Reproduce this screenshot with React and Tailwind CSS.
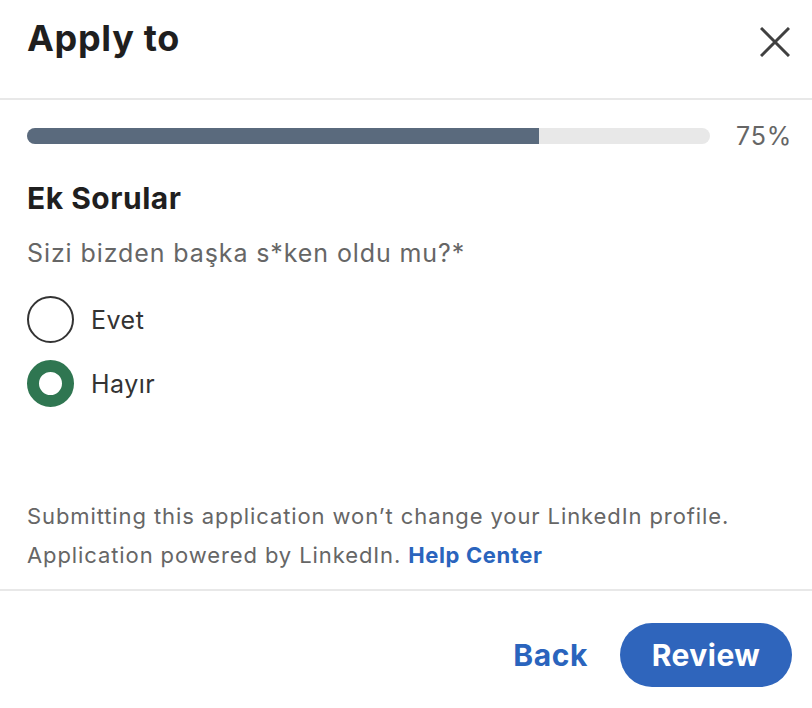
export default function App() {
  const progress = 75;

  return (
    <div className="w-[812px] h-[708px] bg-white font-['Inter',_'Liberation_Sans',_sans-serif] text-[#1f1f1f] overflow-hidden">
      {/* başlık */}
      <div className="h-[100px] pl-[27px] pr-[22px] flex items-start justify-between border-b-2 border-[#e8e8e8]">
        <h1 className="mt-[15px] text-[36px] leading-[46px] font-bold tracking-[0.7px]">Apply to</h1>
        <button className="mt-[27px] text-[#404040]" aria-label="Close">
          <svg width="30" height="30" viewBox="0 0 30 30" fill="none" stroke="currentColor" strokeWidth="3">
            <path d="M1 1 L29 29 M29 1 L1 29" />
          </svg>
        </button>
      </div>

      <div className="pl-[27px] pr-[20px]">
        {/* ilerleme */}
        <div className="mt-[21px] flex items-center gap-[25px]">
          <div className="flex-1 h-[16px] rounded-full bg-[#e8e8e8] overflow-hidden">
            <div className="h-full bg-[#5a6a7d]" style={{ width: `${progress}%` }} />
          </div>
          <span className="w-[57px] text-right text-[25px] leading-[30px] tracking-[0.8px] text-[#666666]">{progress}%</span>
        </div>

        <h2 className="mt-[27px] text-[30px] leading-[40px] font-bold tracking-[0.5px]">Ek Sorular</h2>

        <p className="mt-[20px] text-[25px] leading-[30px] tracking-[0.9px] text-[#666666]">Sizi bizden başka s*ken oldu mu?*</p>

        <div className="mt-[28px] flex flex-col gap-[17px]">
          <label className="flex items-center gap-[17px]">
            <span className="w-[47px] h-[47px] rounded-full border-2 border-[#333333] flex-shrink-0" />
            <span className="text-[25px] leading-[30px] tracking-[0.5px] text-[#333333]">Evet</span>
          </label>
          <label className="flex items-center gap-[17px]">
            <span className="w-[47px] h-[47px] rounded-full border-[12px] border-[#2f7651] bg-white flex-shrink-0" />
            <span className="text-[25px] leading-[30px] tracking-[0.5px] text-[#333333]">Hayır</span>
          </label>
        </div>
      </div>

      {/* alt bilgi */}
      <div className="mt-[90px] px-[27px] pb-[14px] border-b-2 border-[#e8e8e8] text-[22px] leading-[39px] tracking-[0.9px] text-[#666666]">
        <p>Submitting this application won’t change your LinkedIn profile.</p>
        <p>
          Application powered by LinkedIn.{' '}
          <a className="text-[#2a64bd] font-bold tracking-[0.6px]">Help Center</a>
        </p>
      </div>

      <div className="px-[20px] pt-[32px] flex items-center justify-end gap-[32px]">
        <button className="text-[30px] font-bold text-[#2a64bd] tracking-[0.6px]">Back</button>
        <button className="w-[172px] h-[64px] rounded-full bg-[#2f65bc] text-white text-[30px] font-bold tracking-[0.5px]">
          Review
        </button>
      </div>
    </div>
  );
}
